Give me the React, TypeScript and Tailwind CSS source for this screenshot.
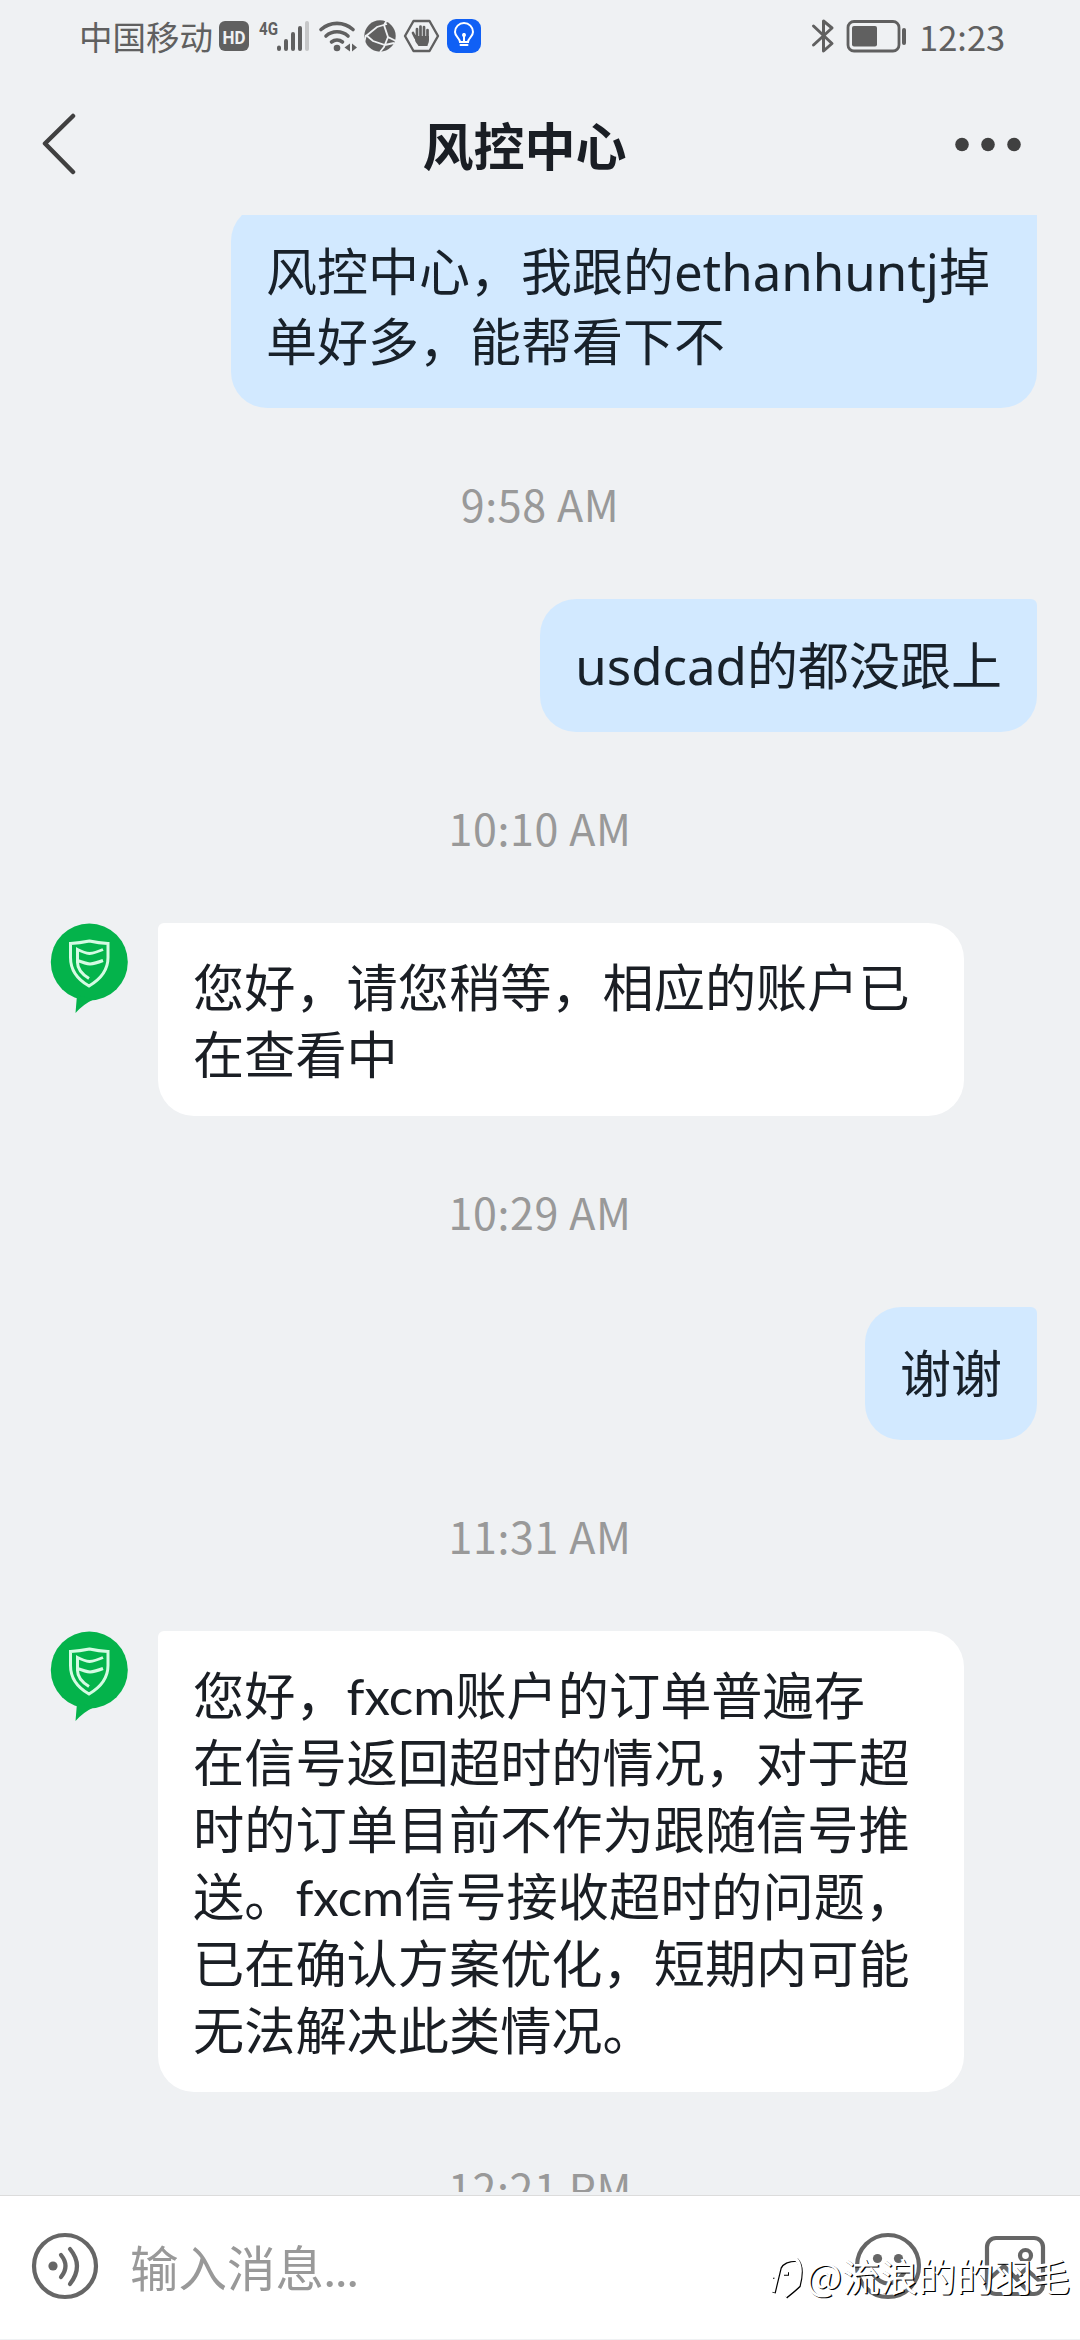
import clsx from "clsx"
import { ReactNode } from "react"

interface IMessage {
    kind: "time" | "sent" | "received"
    lines: string[]
}

const messages: IMessage[] = [
    { kind: "sent", lines: ["风控中心，我跟的ethanhuntj掉", "单好多，能帮看下不"] },
    { kind: "time", lines: ["9:58 AM"] },
    { kind: "sent", lines: ["usdcad的都没跟上"] },
    { kind: "time", lines: ["10:10 AM"] },
    { kind: "received", lines: ["您好，请您稍等，相应的账户已", "在查看中"] },
    { kind: "time", lines: ["10:29 AM"] },
    { kind: "sent", lines: ["谢谢"] },
    { kind: "time", lines: ["11:31 AM"] },
    {
        kind: "received",
        lines: [
            "您好，fxcm账户的订单普遍存",
            "在信号返回超时的情况，对于超",
            "时的订单目前不作为跟随信号推",
            "送。fxcm信号接收超时的问题，",
            "已在确认方案优化，短期内可能",
            "无法解决此类情况。",
        ],
    },
    { kind: "time", lines: ["12:21 PM"] },
]

function StatusBar() {
    return (
        <div className="flex items-center justify-between h-[74px] pl-[79px] pr-[77px] text-[#606060]">
            <div className="flex items-center">
                <span className="text-[33.5px] leading-[74px] pb-[3px] font-['Noto_Sans_CJK_SC',sans-serif] w-[138px] whitespace-nowrap">中国移动</span>
                <svg width="270" height="74" viewBox="217 0 270 74" fill="none">
                    <rect x="219" y="21" width="30" height="30" rx="6" fill="#606060" />
                    <text x="234" y="43.500" textAnchor="middle" fontFamily="Roboto, sans-serif" fontSize="19" fontWeight="700" fill="#eff1f3" textLength="23" lengthAdjust="spacingAndGlyphs">HD</text>
                    <text x="259" y="34.500" fontFamily="Roboto, sans-serif" fontSize="19" fontWeight="700" fill="#606060" textLength="19" lengthAdjust="spacingAndGlyphs">4G</text>
                    <g stroke="#606060" strokeWidth="4" strokeLinecap="round">
                        <path d="M279 47.500v1.500M286 41v8M293 34v15M300 28v21" />
                        <path d="M307 23v26" stroke="#c6c7c8" />
                    </g>
                    <g stroke="#606060" strokeWidth="3.600" strokeLinecap="round">
                        <path d="M321 29.500a24 24 0 0 1 32 0" />
                        <path d="M326 36a16.500 16.500 0 0 1 22 0" />
                        <path d="M331.500 42a9 9 0 0 1 11 0" />
                    </g>
                    <circle cx="337" cy="48" r="3.300" fill="#606060" />
                    <path d="M350 43.500v8l-5.500-4zM352 43.500v8l5-4z" fill="#606060" />
                    <circle cx="380" cy="36" r="15.700" fill="#606060" />
                    <path d="M366 36l11-9 10-3M387 20l-3 5 4 12 8 4M388 37l-4 10-4 5M366 35l7 6 12 4 9-2M366 35l-2 8" stroke="#eff1f3" strokeWidth="1.800" />
                    <path d="M413.500 21h16l8.500 15-8.500 15h-16l-8.500-15z" stroke="#606060" strokeWidth="2.400" strokeLinejoin="round" />
                    <path d="M415.500 38l-2.500-5M417 37v-8M420.500 36v-9.500M424 36v-9M427.500 37v-7" stroke="#606060" strokeWidth="2.700" strokeLinecap="round" />
                    <path d="M415 36h14v4c0 3-1.500 4-1.500 6h-9c-1-2-3.500-4-3.500-6z" fill="#606060" />
                    <rect x="447" y="19" width="34" height="34" rx="9" fill="#1060f5" />
                    <g stroke="#fff" strokeWidth="2" strokeLinecap="round">
                        <path d="M460 42c0-4-5-5-5-10a9 9 0 0 1 18 0c0 5-5 6-5 10z" />
                        <path d="M464 34v7M460.500 45h7" />
                    </g>
                    <circle cx="464" cy="35" r="2" fill="#fff" />
                </svg>
            </div>
            <div className="flex items-center">
                <svg width="100" height="74" viewBox="809 0 100 74" fill="none" stroke="#606060">
                    <path d="M813.500 26l18.500 17.500-8.500 7.500v-30l8.500 7-18.500 17" strokeWidth="3" strokeLinecap="round" strokeLinejoin="round" />
                    <rect x="848" y="21.500" width="51" height="29.500" rx="6" strokeWidth="2.800" />
                    <rect x="852" y="26" width="25" height="20.500" rx="2" fill="#606060" stroke="none" />
                    <path d="M904 30v13" strokeWidth="4" strokeLinecap="round" />
                </svg>
                <span className="text-[34.5px] w-[84px] ml-[10px] leading-[74px] pb-[3px] font-['Noto_Sans_CJK_SC',sans-serif] whitespace-nowrap">12:23</span>
            </div>
        </div>
    )
}

function Header() {
    return (
        <div className="flex items-center justify-between h-[141px] px-[40px]">
            <svg width="40" height="64" viewBox="0 0 40 64" fill="none" stroke="#404040" strokeWidth="4.500" strokeLinecap="round" strokeLinejoin="round">
                <path d="M33 3L5 30.500 33 59" />
            </svg>
            <h1 className="text-[51px] font-bold text-[#1a1e24] pl-[14px] pt-[3px]">风控中心</h1>
            <svg width="66" height="16" viewBox="0 0 66 16" className="mr-[19px]" fill="#404040">
                <circle cx="7" cy="7.500" r="6.800" />
                <circle cx="33" cy="7.500" r="6.800" />
                <circle cx="59" cy="7.500" r="6.800" />
            </svg>
        </div>
    )
}

function Avatar() {
    return (
        <svg width="80" height="92" viewBox="0 0 80 92" fill="none" className="shrink-0 ml-[49px]">
            <circle cx="40.300" cy="39" r="38.500" fill="#04b34b" />
            <path d="M28 72l-1.500 18q8-9 18-13.500z" fill="#04b34b" />
            <g stroke="#d5fbe3" strokeWidth="3">
                <path d="M21.500 20.500q9-0.500 19-2.500 9 2 18.500 2.500v14c0 13-8 22-19 28.500-11.500-6.500-18.500-15.500-18.500-28.500z" />
                <path d="M54 26.500q-8 3.500-13.500 4-5-0.500-12-4v13q0 9 11.500 16M28.500 37.500q8 3 12.500 3.500 5-0.500 13-3.500" />
            </g>
        </svg>
    )
}

function Bubble({ wide, kind, children }: { wide: boolean; kind: IMessage["kind"]; children: ReactNode }) {
    if (kind === "sent") {
        return (
            <div className="flex justify-end pr-[43px]">
                <div className={clsx("bg-[#d2e9ff] text-[#18212a] rounded-[36px] rounded-tr-[6px] px-[35px] pt-[31px] pb-[32px] text-[51px] leading-[70px] whitespace-nowrap", wide && "w-[806px]")}>
                    {children}
                </div>
            </div>
        )
    }
    return (
        <div className="flex items-start">
            <Avatar />
            <div className="bg-white text-[#1a1e24] rounded-[36px] rounded-tl-[6px] ml-[29px] w-[806px] px-[35px] pt-[31px] pb-[28px] text-[51.200px] leading-[67px] whitespace-nowrap font-[Lato,'Noto_Sans_CJK_SC',sans-serif]">
                {children}
            </div>
        </div>
    )
}

function InputBar() {
    return (
        <div className="relative flex items-center h-[144px] pb-[3px] bg-white border-t border-[#dcdcdc]">
            <svg width="68" height="68" viewBox="0 0 68 68" fill="none" stroke="#666" strokeWidth="4.200" className="ml-[31px]" strokeLinecap="round">
                <circle cx="34" cy="34" r="31" />
                <circle cx="22" cy="34" r="4.600" fill="#666" stroke="none" />
                <path d="M30 23q9 11 0 22M39 17q14 17 0 35" />
            </svg>
            <span className="flex-1 ml-[31px] pt-[4px] text-[48.500px] text-[#999] font-[Lato,'Noto_Sans_CJK_SC',sans-serif]">输入消息...</span>
            <svg width="68" height="68" viewBox="0 0 68 68" fill="none" stroke="#666" strokeWidth="4.200" strokeLinecap="round" className="mr-[62px]">
                <circle cx="34" cy="34" r="31" />
                <circle cx="23.500" cy="26.500" r="4.600" fill="#666" stroke="none" />
                <circle cx="44.500" cy="26.500" r="4.600" fill="#666" stroke="none" />
                <path d="M18 41q16 21 32 0" />
            </svg>
            <svg width="62" height="62" viewBox="0 0 62 62" fill="none" stroke="#666" strokeWidth="4.200" className="mr-[34px]">
                <rect x="3" y="3" width="56" height="56" rx="9" />
                <circle cx="41.500" cy="20.500" r="5.500" />
                <path d="M3 46l17-15 27 28M32 43l10-9 17 15" />
            </svg>
            <div className="absolute left-[770px] top-[49px] flex items-center text-white text-[38px] leading-[60px] whitespace-nowrap font-['Noto_Sans_CJK_SC',sans-serif] [text-shadow:1.2px_1.2px_0.5px_#000]">
                <svg width="36" height="44" viewBox="0 0 36 44" fill="none" className="mt-[6px] drop-shadow-[1.2px_1.2px_0.5px_#000]" stroke="#fff" strokeWidth="3.500">
                    <path d="M3 36l6-25q4-8 17-8 7 7 2 26-4 4-13 11M2 20h6M13 17h5" />
                </svg>
                @流浪的的羽毛
            </div>
        </div>
    )
}

function App() {
    return (
        <div className="flex flex-col w-[1080px] h-[2340px] overflow-hidden bg-[#eff1f3] font-['Noto_Sans','Noto_Sans_CJK_SC',sans-serif]" lang="zh-CN">
            <StatusBar />
            <Header />
            <div className="h-[1977px] overflow-hidden">
                <div className="-mt-[10px]">
                    {messages.map((message, index) =>
                        message.kind === "time" ? (
                            <p key={index} className="h-[191px] leading-[190px] text-center text-[43px] tracking-[0.6px] text-[#999] font-['Noto_Sans_CJK_SC',sans-serif]">{message.lines[0]}</p>
                        ) : (
                            <Bubble key={index} kind={message.kind} wide={message.lines.length > 1}>
                                {message.lines.map((line, i) => (
                                    <p key={i}>{line}</p>
                                ))}
                            </Bubble>
                        )
                    )}
                </div>
            </div>
            <div className="h-[3px]" />
            <InputBar />
        </div>
    )
}

export default App
